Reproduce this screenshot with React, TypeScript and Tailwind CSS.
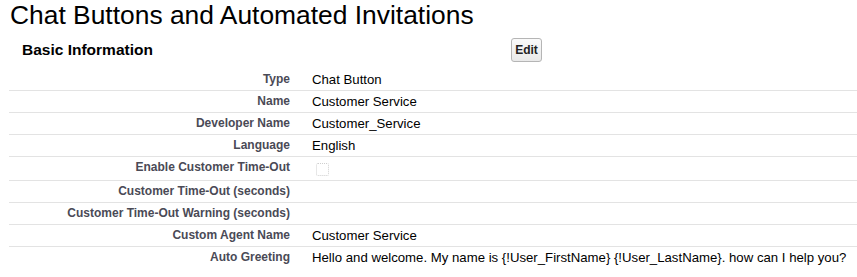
import React from "react";

type Row = { label: string; value?: string; checkbox?: boolean };

const rows: Row[] = [
  { label: "Type", value: "Chat Button" },
  { label: "Name", value: "Customer Service" },
  { label: "Developer Name", value: "Customer_Service" },
  { label: "Language", value: "English" },
  { label: "Enable Customer Time-Out", checkbox: true },
  { label: "Customer Time-Out (seconds)" },
  { label: "Customer Time-Out Warning (seconds)" },
  { label: "Custom Agent Name", value: "Customer Service" },
  {
    label: "Auto Greeting",
    value:
      "Hello and welcome. My name is {!User_FirstName} {!User_LastName}. how can I help you?",
  },
];

export default function App() {
  return (
    <div
      className="w-[857px] h-[277px] bg-white overflow-hidden text-black"
      style={{ fontFamily: '"Liberation Sans", Arial, sans-serif' }}
    >
      <h1 className="pl-[10px] text-[26.4px] leading-[30px] font-normal text-black whitespace-nowrap">
        Chat Buttons and Automated Invitations
      </h1>
      <div className="mt-[8px] ml-[9px] flex h-[24px] items-center">
        <div className="w-[502px] pl-[13px] text-[15.5px] leading-[18px] font-bold text-black">
          Basic Information
        </div>
        <button className="w-[31px] h-[24px] rounded-[3px] border border-[#b5b5b5] bg-gradient-to-b from-[#fafafa] to-[#e9e9e9] text-[12px] font-bold text-[#222] leading-[22px] text-center p-0">
          Edit
        </button>
      </div>
      <div className="mt-[7px] ml-[9px]">
        {rows.map((r, i) => (
          <div
            key={r.label}
            className={`flex ${i === 0 ? "" : "border-t border-[#e3e3e3]"}`}
          >
            <div className="w-[281px] shrink-0 pt-[3px] pb-[3px] text-right text-[12px] leading-[15px] font-bold text-[#4a4a56] whitespace-nowrap">
              {r.label}
            </div>
            <div className="pl-[22px] pt-[3px] pb-[3px] text-[13.2px] leading-[15px] text-black whitespace-nowrap">
              {r.checkbox ? (
                <div className="ml-[4px] mt-[3px] mb-[1px] w-[13px] h-[13px] rounded-[2px] border border-dotted border-[#cfcfcf] bg-white" />
              ) : (
                <span className="inline-block min-h-[15px]">{r.value ?? "\u00a0"}</span>
              )}
            </div>
          </div>
        ))}
      </div>
    </div>
  );
}
